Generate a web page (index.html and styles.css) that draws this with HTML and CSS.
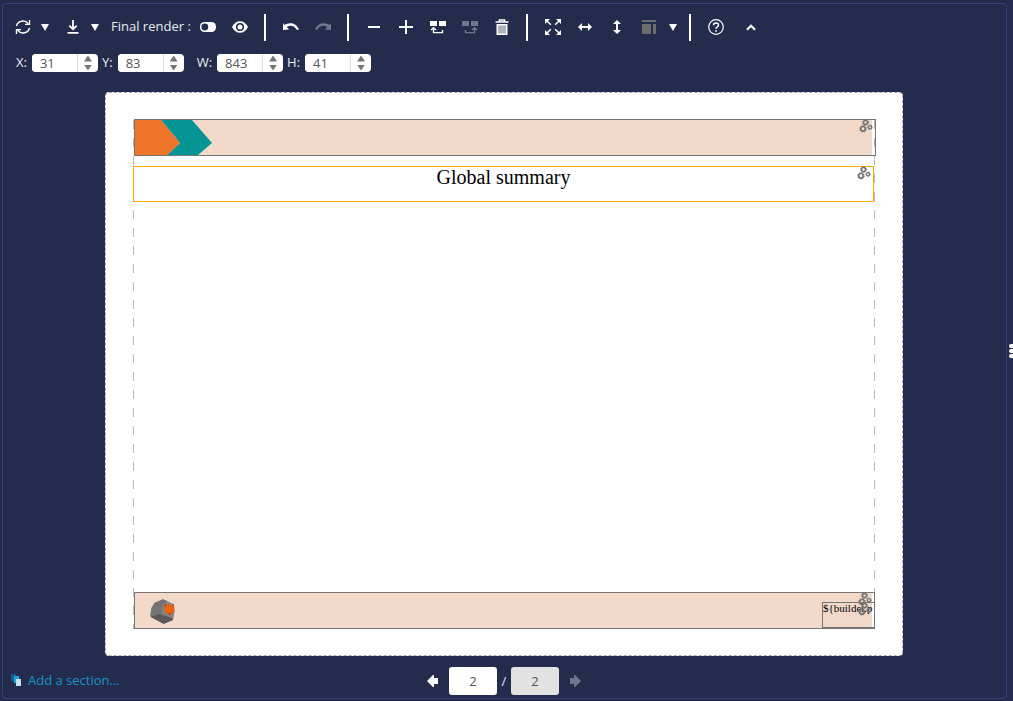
FILE: index.html
```html
<!DOCTYPE html>
<html lang="en">
<head>
  <meta charset="UTF-8" />
  <meta name="viewport" content="width=device-width, initial-scale=1.0" />
  <title>Report builder</title>
  <link rel="stylesheet" href="styles.css">
</head>
<body>

  <svg class="defs" aria-hidden="true">
    <symbol id="gears" viewBox="0 0 14 14">
      <g fill="none" stroke="#757575">
        <circle cx="6.5" cy="3.5" r="2" stroke-width="1.6" />
        <circle cx="6.5" cy="3.5" r="3" stroke-width="1" stroke-dasharray="1.2 1.16" />
        <circle cx="4" cy="9.8" r="2.3" stroke-width="1.7" />
        <circle cx="4" cy="9.8" r="3.3" stroke-width="1" stroke-dasharray="1.3 1.29" />
        <circle cx="11" cy="8.2" r="1.6" stroke-width="1.3" />
        <circle cx="11" cy="8.2" r="2.3" stroke-width=".8" stroke-dasharray="1 1.06" />
      </g>
    </symbol>
  </svg>

  <main class="panel">
    <div class="toolbar">
      <button class="tool" aria-label="Refresh">
        <svg width="16" height="16" viewBox="0 0 16 16" fill="none" stroke="#fff" stroke-width="1.4">
          <path d="M1.5 7.2A6.5 6 0 0 1 13.2 4.6M14.5 1v4.4H10M14.5 8.8A6.5 6 0 0 1 2.8 11.4M1.5 15v-4.4H6" />
        </svg>
      </button>
      <button class="caret" aria-label="Refresh options"><svg width="8" height="7" viewBox="0 0 8 7"><path d="M0 0h8L4 7z" fill="#fff" /></svg></button>
      <button class="tool download" aria-label="Download">
        <svg width="12" height="14" viewBox="0 0 12 14" fill="none" stroke="#fff" stroke-width="1.8">
          <path d="M6 0v9M2.3 5.6L6 9.3l3.7-3.7M.5 12.8h11" />
        </svg>
      </button>
      <button class="caret" aria-label="Download options"><svg width="8" height="7" viewBox="0 0 8 7"><path d="M0 0h8L4 7z" fill="#fff" /></svg></button>
      <span class="render-label">Final render :</span>
      <button class="tool" aria-label="Toggle final render">
        <svg width="16" height="10" viewBox="0 0 16 10"><rect width="16" height="10" rx="4.5" fill="#fff" /><circle cx="4.8" cy="5" r="3.4" fill="#232c4d" /></svg>
      </button>
      <button class="tool" aria-label="Preview">
        <svg width="16" height="12" viewBox="0 0 16 12">
          <path d="M0 6Q3 .2 8 .2T16 6Q13 11.8 8 11.8T0 6z" fill="#fff" />
          <circle cx="8" cy="6" r="3.3" fill="none" stroke="#232c4d" stroke-width="1.6" />
        </svg>
      </button>

      <span class="sep"></span>

      <button class="tool" aria-label="Undo">
        <svg width="16" height="8" viewBox="0 0 16 8"><path d="M0 0l1.6 2C5.5-.8 13-1 16 6.5l-2.4.2C11.5 2.3 7 1.8 3.8 4L6 6.5 0 7z" fill="#fff" /></svg>
      </button>
      <button class="tool" aria-label="Redo" disabled>
        <svg width="16" height="8" viewBox="0 0 16 8"><path d="M16 0l-1.6 2C10.5-.8 3-1 0 6.5l2.4.2C4.5 2.3 9 1.8 12.2 4L10 6.5l6 .5z" fill="#fff" /></svg>
      </button>

      <span class="sep"></span>

      <button class="tool" aria-label="Zoom out">
        <svg width="12" height="2" viewBox="0 0 12 2"><path d="M0 0h12v2H0z" fill="#fff" /></svg>
      </button>
      <button class="tool" aria-label="Zoom in">
        <svg width="14" height="14" viewBox="0 0 14 14"><path d="M6 0h2v6h6v2H8v6H6V8H0V6h6z" fill="#fff" /></svg>
      </button>
      <button class="tool" aria-label="Move before">
        <svg width="16" height="13" viewBox="0 0 16 13">
          <path d="M0 0h7v5H0zM9 0h7v5H9z" fill="#fff" />
          <path d="M3.5 8v3.6h9V9M1 9l2.5-2.3L6 9" fill="none" stroke="#fff" stroke-width="1.4" />
        </svg>
      </button>
      <button class="tool" aria-label="Move after" disabled>
        <svg width="16" height="13" viewBox="0 0 16 13">
          <path d="M0 0h7v5H0zM9 0h7v5H9z" fill="#fff" />
          <path d="M12.5 8v3.6h-9V9M10 9l2.5-2.3L15 9" fill="none" stroke="#fff" stroke-width="1.4" />
        </svg>
      </button>
      <button class="tool" aria-label="Delete">
        <svg width="14" height="16" viewBox="0 0 14 16">
          <path d="M.5 3h13M4.5 3V1h5v2" fill="none" stroke="#fff" stroke-width="1.6" />
          <path d="M1.5 5h11v11h-11z" fill="#fff" />
          <path d="M4 6.5v8M6 6.5v8M8 6.5v8M10 6.5v8" stroke="#4f5671" stroke-width=".9" />
        </svg>
      </button>

      <span class="sep"></span>

      <button class="tool" aria-label="Fit to page">
        <svg width="16" height="16" viewBox="0 0 16 16">
          <path d="M1.5 1.5l4.3 4.3M14.5 1.5l-4.3 4.3M1.5 14.5l4.3-4.3M14.5 14.5l-4.3-4.3" stroke="#fff" stroke-width="1.5" />
          <path d="M0 0h5L0 5zM16 0v5l-5-5zM0 16v-5l5 5zM16 16h-5l5-5z" fill="#fff" />
        </svg>
      </button>
      <button class="tool" aria-label="Fit width">
        <svg width="14" height="8" viewBox="0 0 14 8"><path d="M0 4l4-4v3h6V0l4 4-4 4V5H4v3z" fill="#fff" /></svg>
      </button>
      <button class="tool" aria-label="Fit height">
        <svg width="8" height="14" viewBox="0 0 8 14"><path d="M4 0l4 4H5v6h3l-4 4-4-4h3V4H0z" fill="#fff" /></svg>
      </button>
      <button class="tool" aria-label="Layout">
        <svg width="14" height="14" viewBox="0 0 14 14"><path d="M0 0h14v2H0zM0 4h9v10H0zM11 4h3v10h-3z" fill="#6d6d6d" /></svg>
      </button>
      <button class="caret caret-wide" aria-label="Layout options"><svg width="8" height="7" viewBox="0 0 8 7"><path d="M0 0h8L4 7z" fill="#fff" /></svg></button>

      <span class="sep"></span>

      <button class="tool" aria-label="Help">
        <svg width="16" height="16" viewBox="0 0 16 16" fill="none" stroke="#fff">
          <circle cx="8" cy="8" r="7.3" stroke-width="1.2" />
          <path d="M5.5 6.3C5.5 3.1 10.5 3.2 10.5 6c0 2-2.5 1.8-2.5 3.8M8 11v1.8" stroke-width="1.5" />
        </svg>
      </button>
      <button class="tool collapse" aria-label="Collapse">
        <svg width="10" height="7" viewBox="0 0 10 7"><path d="M1 5.8L5 1.8l4 4" fill="none" stroke="#fff" stroke-width="2.2" /></svg>
      </button>
    </div>

    <form class="position">
      <div class="field">
        <label for="posX">X:</label>
        <div class="spin">
          <input type="text" id="posX" value="31" />
          <div class="arrows">
            <button type="button" class="up" aria-label="Increase X"></button>
            <button type="button" class="down" aria-label="Decrease X"></button>
          </div>
        </div>
      </div>
      <div class="field">
        <label for="posY">Y:</label>
        <div class="spin">
          <input type="text" id="posY" value="83" />
          <div class="arrows">
            <button type="button" class="up" aria-label="Increase Y"></button>
            <button type="button" class="down" aria-label="Decrease Y"></button>
          </div>
        </div>
      </div>
      <div class="field field-w">
        <label for="sizeW">W:</label>
        <div class="spin">
          <input type="text" id="sizeW" value="843" />
          <div class="arrows">
            <button type="button" class="up" aria-label="Increase width"></button>
            <button type="button" class="down" aria-label="Decrease width"></button>
          </div>
        </div>
      </div>
      <div class="field">
        <label for="sizeH">H:</label>
        <div class="spin">
          <input type="text" id="sizeH" value="41" />
          <div class="arrows">
            <button type="button" class="up" aria-label="Increase height"></button>
            <button type="button" class="down" aria-label="Decrease height"></button>
          </div>
        </div>
      </div>
    </form>

    <section class="page">
      <div class="page-content">
        <div class="block band band-top">
          <svg width="77" height="35" viewBox="0 0 77 35">
            <path d="M26 0h31l20 23-14 12H32l13-12z" fill="#069595" />
            <path d="M0 0h26l19 23-13 12H0z" fill="#ee7429" />
          </svg>
          <button class="gear" aria-label="Header settings"><svg width="14" height="14"><use href="#gears" /></svg></button>
        </div>

        <div class="block heading">
          <h1>Global summary</h1>
          <button class="gear" aria-label="Title settings"><svg width="14" height="14"><use href="#gears" /></svg></button>
        </div>

        <div class="block band band-bottom">
          <svg class="rock" width="25" height="25" viewBox="164 57 75 75">
            <path d="M165 110l3-25 10-17 25-10 12 5 20 10 3 20-5 27-28 12z" fill="#858585" />
            <path d="M168 85l10-17 25-10 12 5-13 13-4 30-33 2z" fill="#757373" />
            <path d="M165 110l29-8 36 12 3 6-28 11z" fill="#5c5859" />
            <path d="M207 77l9-5 20 5 1 17-10 10-18-6z" fill="#e8640f" />
            <path d="M207 73l7 1-5 7zM219 99l9 1-4 6zM230 72l5 1 1 6z" fill="#9d3f16" />
          </svg>
          <div class="block page-number">
            <span>${builder.p</span>
            <button class="gear" aria-label="Page number settings"><svg width="14" height="14"><use href="#gears" /></svg></button>
          </div>
          <button class="gear" aria-label="Footer settings"><svg width="14" height="14"><use href="#gears" /></svg></button>
        </div>
      </div>
    </section>

    <footer class="bottom">
      <a class="add-section" href="#">
        <svg width="12" height="12" viewBox="0 0 12 12">
          <path d="M0 0h5v7H0z" fill="#14618c" />
          <path d="M3 2h5v7H3z" fill="#1ba5dc" />
          <path d="M5 5h5v7H5z" fill="#c5e3f1" />
        </svg>
        Add a section...
      </a>
      <nav class="pager">
        <button class="arrow" aria-label="Previous page">
          <svg width="12" height="12" viewBox="0 0 12 12"><path d="M0 6l6-6h1v3h4v6H7v3H6z" fill="#fff" /></svg>
        </button>
        <input type="text" value="2" aria-label="Current page" />
        <span>/</span>
        <input type="text" value="2" aria-label="Page count" disabled />
        <button class="arrow" aria-label="Next page" disabled>
          <svg width="12" height="12" viewBox="0 0 12 12"><path d="M12 6L6 0H5v3H1v6h4v3h1z" fill="#fff" /></svg>
        </button>
      </nav>
    </footer>
  </main>

  <div class="handle"><i></i><i></i><i></i></div>

</body>
</html>
```

FILE: styles.css
```css
* { box-sizing: border-box; }
body {
  display: flex;
  height: 100vh;
  margin: 0;
  padding: 3px 0 2px 2px;
  overflow: hidden;
  background-color: #232c4d;
  color: #e8eaf0;
  font-family: "Open Sans", "Noto Sans", sans-serif;
  font-size: 13px;
}
svg { display: block; }
.defs { position: absolute; width: 0; height: 0; }
button {
  padding: 0;
  border: none;
  background: none;
  cursor: pointer;
}
button:disabled { opacity: .35; cursor: default; }
input {
  min-width: 0;
  border: none;
  font-family: inherit;
  font-size: 13px;
  color: #555;
}
.panel {
  display: flex;
  flex-direction: column;
  flex: 1;
  min-width: 0;
  border: 1px solid #34427a;
  border-radius: 4px;
}

/* toolbar */
.toolbar {
  display: flex;
  align-items: flex-start;
  padding: 10px 4px 0;
}
.tool, .caret {
  display: flex;
  flex-shrink: 0;
  align-items: center;
  justify-content: center;
  width: 32px;
  height: 26px;
}
.caret { width: 12px; }
.caret-wide { width: 16px; }
.download { margin-left: 6px; }
.collapse { margin-left: 3px; }
.render-label {
  width: 81px;
  margin-left: 10px;
  line-height: 24px;
  white-space: nowrap;
}
.sep {
  width: 2px;
  height: 27px;
  margin: 0 8px;
  background-color: #fff;
}
.sep + .tool { margin-left: 1px; }
.sep + .tool + .tool + .sep { margin-left: 8px; }

/* position and size of the selected block */
.position {
  display: flex;
  gap: 4px;
  margin: 13px 13px 20px;
}
.field {
  display: flex;
  align-items: center;
  gap: 5px;
  height: 18px;
}
.field label, .spin input { padding-bottom: 2px; }
.field-w { margin-left: 9px; }
.spin {
  display: flex;
  width: 66px;
  height: 18px;
  overflow: hidden;
  border-radius: 4px;
  background-color: #fff;
}
.spin input {
  flex: 1;
  padding-left: 8px;
  border-right: 1px solid #ddd;
}
.arrows {
  display: flex;
  flex-direction: column;
  align-items: center;
  justify-content: center;
  gap: 3px;
  width: 20px;
}
.up, .down {
  width: 8px;
  height: 6px;
  background-color: #757575;
  clip-path: polygon(50% 0, 100% 100%, 0 100%);
}
.down { clip-path: polygon(0 0, 100% 0, 50% 100%); }

/* page */
.page {
  display: flex;
  flex: 1;
  margin: 0 103px 0 102px;
  padding: 26px 26px 26px 27px;
  border: 1px dashed #a5abb0;
  border-radius: 4px;
  background-color: #fff;
}
.page-content {
  display: flex;
  flex-direction: column;
  flex: 1;
  min-width: 0;
  background-image:
    repeating-linear-gradient(#bbb 0 9px, transparent 9px 18px),
    repeating-linear-gradient(#bbb 0 9px, transparent 9px 18px);
  background-size: 1px 100%;
  background-position: 0 1px, calc(100% - 1px) 1px;
  background-repeat: no-repeat;
}
.block {
  position: relative;
  border: 1px solid #757575;
}
.band {
  height: 37px;
  background-image: linear-gradient(#f3d9ca, #f3d9ca);
  background-repeat: no-repeat;
}
.band-top {
  margin-left: 1px;
  background-size: calc(100% - 3px) 100%;
}
.heading {
  height: 36px;
  margin: 10px 2px 0 0;
  border-color: #f9a800;
  background-color: #fff;
}
h1 {
  margin: 0;
  color: #000;
  font: 20px/20px "Liberation Serif", serif;
  text-align: center;
}
.band-bottom {
  display: flex;
  justify-content: space-between;
  margin: auto 1px 0;
  background-size: calc(100% - 2px) 100%;
}
.rock { margin: 6px 0 0 15px; }
.page-number {
  width: 53px;
  height: 26px;
  margin: 9px -1px 0 0;
  color: #000;
  font: 11px/11px "Liberation Serif", serif;
}
.gear {
  position: absolute;
  top: -1px;
  right: 2px;
}

/* bottom bar */
.bottom {
  display: grid;
  grid-template-columns: 1fr auto 1fr;
  align-items: center;
  padding: 11px 9px 3px 8px;
}
.add-section {
  display: flex;
  align-items: center;
  gap: 5px;
  padding-bottom: 2px;
  color: #1593c9;
  text-decoration: none;
}
.pager {
  display: flex;
  align-items: center;
}
.pager input {
  width: 48px;
  height: 28px;
  padding: 0;
  border-radius: 3px;
  background-color: #fff;
  text-align: center;
}
.pager input:disabled { background-color: #e2e2e2; }
.pager span {
  width: 14px;
  text-align: center;
}
.arrow { margin: 0 10px; }

/* side panel handle */
.handle {
  display: flex;
  flex-direction: column;
  justify-content: center;
  gap: 1px;
  width: 6px;
  padding-left: 2px;
}
.handle i {
  height: 4px;
  border-radius: 2px 0 0 2px;
  background-color: #fff;
}
```
